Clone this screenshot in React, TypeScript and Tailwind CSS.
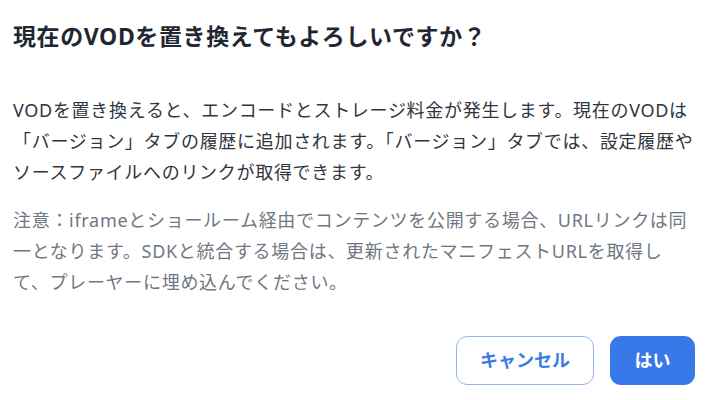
import React from "react";

const font = {
  fontFamily: '"Noto Sans", "Noto Sans CJK JP", sans-serif',
};

const App: React.FC = () => {
  return (
    <div
      className="w-[711px] h-[400px] bg-white flex flex-col px-[13px] pt-[20px]"
      style={font}
    >
      <h2 className="text-[23px] leading-[32px] font-bold tracking-[0.6px] text-[#1f2733]">
        現在のVODを置き換えてもよろしいですか？
      </h2>

      <p className="mt-[43px] text-[18px] leading-[31px] tracking-[0.7px] text-[#2f3640] whitespace-nowrap">
        VODを置き換えると、エンコードとストレージ料金が発生します。現在のVODは
        <br />
        「バージョン」タブの履歴に追加されます。「バージョン」タブでは、設定履歴や
        <br />
        ソースファイルへのリンクが取得できます。
      </p>

      <p className="mt-[17px] text-[18px] leading-[31px] tracking-[0.7px] text-[#6f7782] whitespace-nowrap">
        注意：iframeとショールーム経由でコンテンツを公開する場合、URLリンクは同
        <br />
        一となります。SDKと統合する場合は、更新されたマニフェストURLを取得し
        <br />
        て、プレーヤーに埋め込んでください。
      </p>

      <div className="mt-[38px] flex justify-end gap-[16px] pr-[3px]">
        <button className="w-[138px] h-[49px] rounded-[11px] border border-[#93b6f2] bg-white text-[#3a7be6] text-[18px] font-bold">
          キャンセル
        </button>
        <button className="w-[85px] h-[49px] rounded-[11px] bg-[#3878e8] text-white text-[18px] font-bold">
          はい
        </button>
      </div>
    </div>
  );
};

export default App;
